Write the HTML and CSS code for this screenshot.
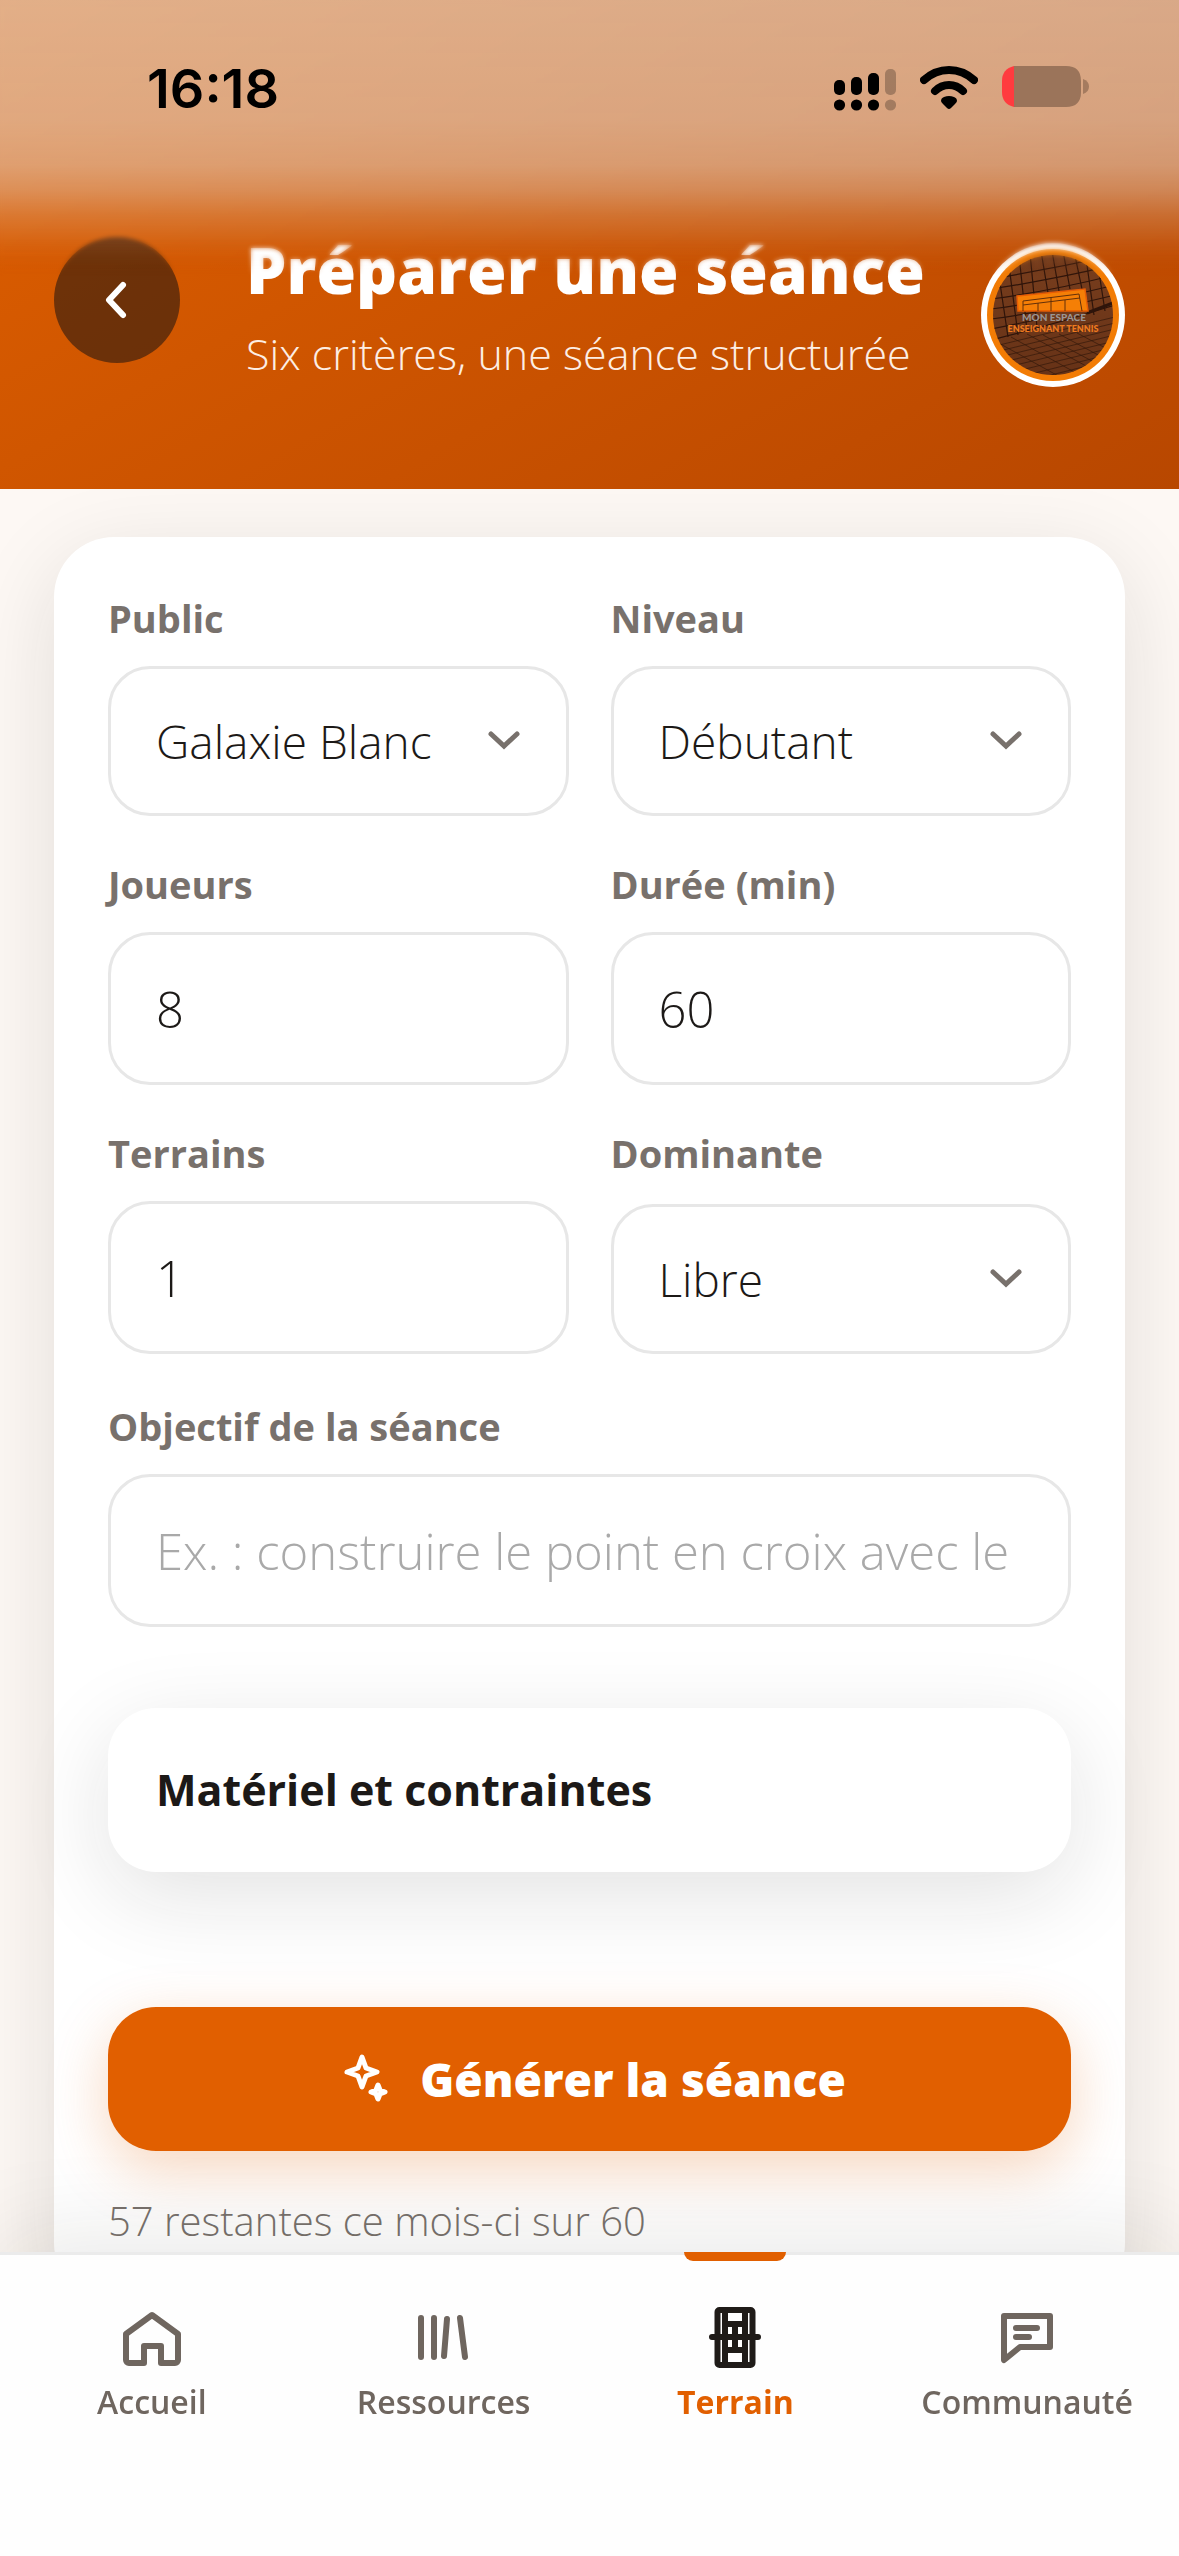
FILE: index.html
```html
<!DOCTYPE html>
<html lang="fr">
<head>
    <meta charset="UTF-8">
    <meta name="viewport" content="width=device-width, initial-scale=1.0">
    <title>Préparer une séance</title>
    <link rel="stylesheet" href="styles.css">
</head>
<body>

    <header class="header">
        <div class="status-bar">
            <span class="status-time">16:18</span>
            <div class="status-icons">
                <svg width="62" height="45" viewBox="0 0 62 45">
                    <rect x="0" y="14" width="11" height="15" rx="5"/>
                    <rect x="17" y="11" width="11" height="18" rx="5"/>
                    <rect x="34" y="7" width="11" height="22" rx="5"/>
                    <rect x="51" y="3" width="11" height="26" rx="5" opacity="0.25"/>
                    <circle cx="5.5" cy="39" r="5.6"/>
                    <circle cx="22.5" cy="39" r="5.6"/>
                    <circle cx="39.5" cy="39" r="5.6"/>
                    <circle cx="56.5" cy="39" r="5.6" opacity="0.25"/>
                </svg>
                <svg width="58" height="45" viewBox="0 0 58 45">
                    <g fill="none" stroke="#000" stroke-width="8" stroke-linecap="round">
                        <path d="M4 14 Q15 4 29 4 Q43 4 54 14"/>
                        <path d="M15 25 Q21 19 29 19 Q37 19 43 25"/>
                    </g>
                    <path d="M21 35 Q21 32 24 31 Q29 29 34 31 Q37 32 37 35 Q37 36 35 38 L31 42 Q29 44 27 42 L23 38 Q21 36 21 35Z"/>
                </svg>
                <svg width="87" height="45" viewBox="0 0 87 45">
                    <path d="M15 0 H64 Q79 0 79 15 V26 Q79 41 64 41 H12 V0Z" fill="#9b745a"/>
                    <path d="M12 0 V41 Q0 38 0 26 V15 Q0 3 12 0Z" fill="#ff3b3f"/>
                    <path d="M81 13 Q87 15 87 20.500 Q87 26 81 28Z" fill="#a57b5f"/>
                </svg>
            </div>
        </div>

        <div class="header-row">
            <button type="button" class="back-button" aria-label="Retour">
                <svg width="36" height="48" viewBox="0 0 36 48">
                    <path d="M24 9 L10 24 L24 39" fill="none" stroke="#fff" stroke-width="6" stroke-linecap="round" stroke-linejoin="round"/>
                </svg>
            </button>
            <div class="header-text">
                <h1>Préparer une séance</h1>
                <p>Six critères, une séance structurée</p>
            </div>
            <a href="#profil" class="avatar" aria-label="Mon profil">
                <svg width="144" height="144" viewBox="0 0 144 144">
                    <defs>
                        <clipPath id="photo"><circle cx="72" cy="72" r="60"/></clipPath>
                        <linearGradient id="clay" x1="0" y1="0" x2="0" y2="1">
                            <stop offset="0" stop-color="#7a3f1e"/>
                            <stop offset="1" stop-color="#653116"/>
                        </linearGradient>
                    </defs>
                    <circle cx="72" cy="72" r="72" fill="#fff"/>
                    <circle cx="72" cy="72" r="66" fill="#f27c05"/>
                    <g clip-path="url(#photo)">
                        <rect width="144" height="144" fill="url(#clay)"/>
                        <!-- net -->
                        <g fill="none" stroke="#2e140a" stroke-width="1.2">
                            <path d="M10 36 Q70 26 134 12 M10 46 Q70 37 134 22 M10 56 Q70 48 134 32 M10 66 Q70 58 134 42 M10 76 Q70 68 134 52 M10 86 Q40 80 60 76 M10 97 Q72 82 134 62"/>
                            <path d="M16 20 L27 94 M27 15 L37 92 M38 12 L46 88 M49 10 L56 84 M60 8 L67 50 M71 8 L78 48 M82 8 L89 46 M93 8 L101 46 M104 8 L113 72 M115 10 L124 68 M126 16 L134 64"/>
                        </g>
                        <path d="M106 70 L134 59" stroke="#2e140a" stroke-width="3"/>
                        <!-- court surface -->
                        <g fill="none" stroke="#35190c" stroke-width="1" opacity="0.7">
                            <path d="M10 104 L134 74 M10 110 L134 80 M10 116 L134 86 M10 122 L134 92 M10 128 L134 98 M20 132 L134 104 M30 136 L134 110 M50 137 L134 116 M14 98 L90 140 M30 94 L106 136 M46 91 L118 130 M62 92 L126 126 M78 91 L132 120 M96 90 L134 110 M10 108 L66 138"/>
                        </g>
                    </g>
                    <path d="M36 53 L104 46 L107 68 H37Z" fill="#f57f06" stroke="#e65c05" stroke-width="1.500"/>
                    <path d="M42 68 V58 L98 51 L101 68 M42 62 L99 55 M57 60 V68 M70 54 V68 M84 57 V68" fill="none" stroke="#633009" stroke-width="1"/>
                    <text x="73" y="78" class="logo-top">MON ESPACE</text>
                    <text x="72" y="89" class="logo-bottom">ENSEIGNANT TENNIS</text>
                </svg>
            </a>
        </div>
    </header>

    <main class="content">
        <form class="card">
            <div class="fields">
                <div class="field">
                    <label for="public">Public</label>
                    <select id="public" name="public">
                        <option>Galaxie Blanc</option>
                    </select>
                </div>
                <div class="field">
                    <label for="niveau">Niveau</label>
                    <select id="niveau" name="niveau">
                        <option>Débutant</option>
                    </select>
                </div>
                <div class="field">
                    <label for="joueurs">Joueurs</label>
                    <input type="text" inputmode="numeric" id="joueurs" name="joueurs" value="8">
                </div>
                <div class="field">
                    <label for="duree">Durée (min)</label>
                    <input type="text" inputmode="numeric" id="duree" name="duree" value="60">
                </div>
                <div class="field">
                    <label for="terrains">Terrains</label>
                    <input type="text" inputmode="numeric" id="terrains" name="terrains" value="1">
                </div>
                <div class="field">
                    <label for="dominante">Dominante</label>
                    <select id="dominante" name="dominante">
                        <option>Libre</option>
                    </select>
                </div>
            </div>

            <div class="field">
                <label for="objectif">Objectif de la séance</label>
                <input type="text" id="objectif" name="objectif" placeholder="Ex. : construire le point en croix avec le">
            </div>

            <details class="options">
                <summary>Matériel et contraintes</summary>
            </details>

            <button type="submit" class="submit-button">
                <svg width="60" height="60" viewBox="0 0 60 60" fill="none" stroke="#fff" stroke-width="5" stroke-linejoin="round">
                    <path d="M29 8 L33 19 L44 23 L33 27 L29 38 L25 27 L14 23 L25 19Z"/>
                    <path d="M45 36 L47 41 L52 43 L47 45 L45 50 L43 45 L38 43 L43 41Z"/>
                </svg>
                <span>Générer la séance</span>
            </button>

            <p class="quota">57 restantes ce mois-ci sur 60</p>
        </form>
    </main>

    <nav class="tab-bar">
        <a href="#accueil" class="tab">
            <svg width="72" height="72" viewBox="0 0 72 72">
                <path d="M36 14 L62 33 V59 a3 3 0 0 1 -3 3 H45 V45 H28 V62 H13 a3 3 0 0 1 -3 -3 V33Z"/>
            </svg>
            <span>Accueil</span>
        </a>
        <a href="#ressources" class="tab">
            <svg width="72" height="72" viewBox="0 0 72 72">
                <path d="M13 17 V56 M26 17 V56 M39 18 L36 55 M52 17 L57 56"/>
            </svg>
            <span>Ressources</span>
        </a>
        <a href="#terrain" class="tab active">
            <svg width="72" height="72" viewBox="0 0 72 72">
                <rect x="18.500" y="9" width="35" height="55" rx="2"/>
                <path d="M26 9 V64 M46 9 V64 M26 23 H46 M26 49 H46 M36 23 V49 M13 36 H59"/>
            </svg>
            <span>Terrain</span>
        </a>
        <a href="#communaute" class="tab">
            <svg width="72" height="72" viewBox="0 0 72 72">
                <path d="M13 15 H59 V46 H29 L13 59Z M25 27 H46 M25 36 H38"/>
            </svg>
            <span>Communauté</span>
        </a>
    </nav>

</body>
</html>
```
FILE: styles.css
```css
* {
    box-sizing: border-box;
}

body {
    font-family: "Open Sans", sans-serif;
    background-color: #fdf8f4;
    color: #1c1917;
    margin: 0;
}

h1, p {
    margin: 0;
}

svg {
    display: block;
    flex-shrink: 0;
}

/* Header */
.header {
    position: relative;
    padding-bottom: 102px;
    background: linear-gradient(150deg, #e06000, #b84700);
    color: #fff;
}

/* Frosted strip under the system status bar */
.header::after {
    content: "";
    position: absolute;
    top: 0;
    left: 0;
    right: 0;
    height: 276px;
    background: linear-gradient(rgba(228, 228, 226, 0.6) 0, rgba(228, 225, 222, 0.57) 120px, rgba(228, 225, 222, 0.5) 165px, rgba(228, 225, 222, 0.39) 190px, rgba(228, 225, 222, 0.22) 215px, rgba(228, 225, 222, 0.09) 240px, rgba(228, 225, 222, 0) 276px);
    backdrop-filter: blur(2px);
    mask-image: linear-gradient(#000 240px, transparent);
    pointer-events: none;
}

.status-bar {
    position: relative;
    z-index: 1;
    display: flex;
    justify-content: space-between;
    align-items: center;
    height: 177px;
    padding: 0 90px 0 147px;
    color: #000;
}

.status-time {
    font-family: Inter, sans-serif;
    font-size: 54px;
    font-weight: 600;
    line-height: 60px;
}

.status-icons {
    display: flex;
    gap: 24px;
}

.header-row {
    display: flex;
    padding: 60px 54px 0;
}

.back-button {
    display: flex;
    justify-content: center;
    align-items: center;
    flex-shrink: 0;
    width: 126px;
    height: 126px;
    padding: 0;
    border: none;
    border-radius: 50%;
    background-color: rgba(28, 20, 16, 0.56);
    cursor: pointer;
}

.header-text {
    flex: 1;
    margin-left: 66px;
}

.header-text h1 {
    font-size: 64px;
    font-weight: 800;
    line-height: 66px;
    white-space: nowrap;
}

.header-text p {
    margin-top: 21px;
    font-size: 43px;
    font-weight: 300;
    line-height: 60px;
    color: #fdeee4;
}

.avatar {
    margin-top: 6px;
}

.logo-top, .logo-bottom {
    font-family: Lato, sans-serif;
    font-weight: 900;
    text-anchor: middle;
}

.logo-top {
    font-size: 10px;
    fill: #9b9594;
}

.logo-bottom {
    font-size: 9px;
    fill: #ee7a1f;
}

/* Form card */
.content {
    padding: 48px 54px 120px;
}

.card {
    padding: 57px 54px 54px;
    border-radius: 60px;
    background-color: #fff;
    box-shadow: 0 24px 90px rgba(28, 25, 23, 0.12);
}

.fields {
    display: grid;
    grid-template-columns: 1fr 1fr;
    gap: 44px 42px;
    margin-bottom: 48px;
}

.field {
    display: flex;
    flex-direction: column;
    justify-content: space-between;
    gap: 24px;
    min-width: 0;
}

label {
    font-size: 38px;
    font-weight: 700;
    line-height: 48px;
    color: #78716c;
}

input, select {
    width: 100%;
    border: 3px solid #e7e7e7;
    border-radius: 42px;
    background-color: #fff;
    color: #1c1917;
    font-family: inherit;
    font-weight: 300;
}

input {
    height: 153px;
    padding: 0 45px;
    font-size: 49px;
}

input::placeholder {
    color: #a9a9a9;
    opacity: 1;
}

select {
    height: 150px;
    padding: 0 120px 0 45px;
    font-size: 46px;
    appearance: none;
    background-image: url("data:image/svg+xml,%3Csvg xmlns='http://www.w3.org/2000/svg' width='32' height='20' viewBox='0 0 32 20'%3E%3Cpath d='M3 3 L16 15 L29 3' fill='none' stroke='%2378716c' stroke-width='5' stroke-linecap='round'/%3E%3C/svg%3E");
    background-repeat: no-repeat;
    background-position: right 46px center;
}

.options {
    margin-top: 81px;
    border-radius: 48px;
    background-color: #fff;
    box-shadow: 0 24px 90px rgba(28, 25, 23, 0.12);
}

.options summary {
    padding: 52px 48px;
    font-size: 43px;
    font-weight: 700;
    line-height: 60px;
    list-style: none;
    cursor: pointer;
}

.submit-button {
    display: flex;
    justify-content: center;
    align-items: center;
    gap: 27px;
    width: 100%;
    height: 144px;
    margin-top: 135px;
    border: none;
    border-radius: 48px;
    background-color: #e15f00;
    box-shadow: 0 18px 60px rgba(225, 95, 0, 0.26);
    color: #fff;
    font-family: inherit;
    font-size: 46px;
    font-weight: 800;
    line-height: 60px;
    cursor: pointer;
}

.quota {
    margin-top: 42px;
    font-size: 40px;
    font-weight: 300;
    line-height: 56px;
    color: #78716c;
}

/* Bottom navigation */
.tab-bar {
    position: fixed;
    left: 0;
    right: 0;
    bottom: 0;
    display: flex;
    padding: 0 6px 136px;
    border-top: 3px solid #ebebeb;
    background-color: #fefefe;
    box-shadow: 0 -12px 90px rgba(28, 25, 23, 0.1);
}

.tab {
    position: relative;
    display: flex;
    flex: 1;
    flex-direction: column;
    align-items: center;
    gap: 11px;
    padding-top: 46px;
    font-size: 32px;
    font-weight: 600;
    line-height: 36px;
    color: #6f665f;
    text-decoration: none;
}

.tab svg {
    fill: none;
    stroke: #6f665f;
    stroke-width: 6;
    stroke-linecap: round;
    stroke-linejoin: round;
}

.tab.active {
    color: #e15f00;
    font-weight: 700;
}

.tab.active svg {
    stroke: #1f1b18;
}

.tab.active::before {
    content: "";
    position: absolute;
    top: -3px;
    width: 102px;
    height: 9px;
    border-radius: 0 0 9px 9px;
    background-color: #e15f00;
}
```
